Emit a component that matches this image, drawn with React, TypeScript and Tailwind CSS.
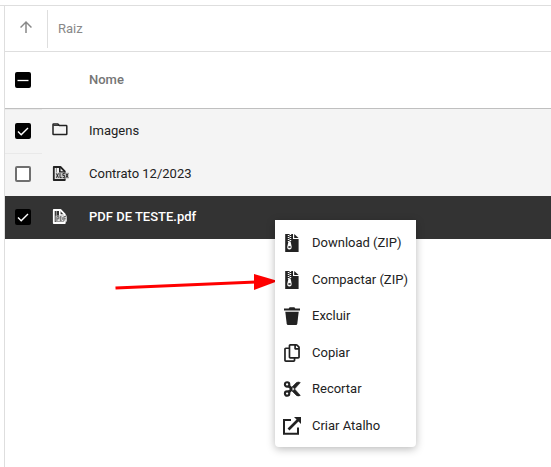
import { useEffect, useRef, useState } from "react";
import type { ReactNode } from "react";
import { FaRegCopy } from "react-icons/fa";
import { MdArrowUpward } from "react-icons/md";

function Checkbox({ label, initial = false, mixed = false }: { label: string; initial?: boolean; mixed?: boolean }) {
  const [checked, setChecked] = useState(initial);
  const ref = useRef<HTMLInputElement>(null);
  useEffect(() => {
    if (ref.current) ref.current.indeterminate = mixed;
  }, [mixed]);
  const filled = checked || mixed;
  return (
    <span className="relative block size-4">
      <input
        ref={ref}
        type="checkbox"
        aria-label={label}
        checked={checked}
        onChange={(e) => setChecked(e.target.checked)}
        className="block size-4 appearance-none rounded-xs border-2 border-[#6f6f6f] bg-white checked:border-black checked:bg-black indeterminate:border-black indeterminate:bg-black"
      />
      {filled && (
        <svg viewBox="0 0 16 16" className="pointer-events-none absolute inset-0 size-4" fill="none" stroke="white">
          {mixed ? <path d="M2.5 8.5h11" strokeWidth="1.3" /> : <path d="M3 8.6l3.2 3.2L13 4.9" strokeWidth="1.4" />}
        </svg>
      )}
    </span>
  );
}

function FolderIcon() {
  return (
    <svg viewBox="0 0 18 18" className="size-[18px]" fill="none" stroke="#222" strokeWidth="1.5">
      <path d="M2 13V3.6q0-.6.6-.6h4.2l1.6 1.6h6.8q.6 0 .6.6V13q0 .6-.6.6H2.6q-.6 0-.6-.6z" />
      <path d="M2.4 4.4h5.8" strokeWidth="1" />
    </svg>
  );
}

function FileTypeIcon({ kind, dark = false }: { kind: "XLSX" | "PDF"; dark?: boolean }) {
  const ink = dark ? "#ffffff" : "#222222";
  const wide = kind === "XLSX";
  return (
    <svg viewBox="0 0 18 18" className="size-[18px]" fill="none">
      <path d="M2.8 15V2h6.7l4.3 4.3V15z" stroke={ink} strokeWidth="1.8" strokeLinejoin="round" />
      <path d="M8.8 2v5h5" stroke={ink} strokeWidth="1.6" />
      <path d="M5.4 3v4.5" stroke={ink} strokeWidth="1" opacity="0.5" />
      <rect x="4.6" y="7.6" width={wide ? 13.2 : 11.2} height="6" fill={dark ? "#e6e6e6" : "#c4c4c4"} />
      <g stroke={dark ? "#555" : "#222"} strokeWidth="0.9">
        {wide ? (
          <path d="M5.3 8.4l2.2 4.4M7.5 8.4l-2.2 4.4M9 8.2v4.4h1.7M13.8 8.6h-1.9v1.9h1.7v2.1h-1.9M14.9 8.4l2.2 4.4M17.1 8.4l-2.2 4.4" />
        ) : (
          <path d="M5.9 13V8.6h1.9v2.2H5.9M9.3 8.6v4h.9l1-1V9.6l-1-1zM12.9 13V8.6h2.3M12.9 10.8h1.9" />
        )}
      </g>
    </svg>
  );
}

function ZipIcon() {
  return (
    <svg viewBox="0 0 18 18" className="size-[18px]" fill="currentColor">
      <path d="M2.2 0H10v5h5.6v13H2.2z" />
      <path d="M11.2 0l4.4 4H11.2z" />
      <path d="M5.6 1v7M7.4 0v7" stroke="white" strokeWidth="1.6" strokeDasharray="1 1" />
      <path d="M5.5 7.5h2.1l1 5q.3 2.9-2.2 2.9t-2.1-2.9z" fill="white" />
      <path d="M5.4 12.2h2.2v1.6H5.4z" />
    </svg>
  );
}

function TrashIcon() {
  return (
    <svg viewBox="0 0 18 18" className="size-[18px]" fill="currentColor">
      <path d="M1 1.5h4.7L6.6.3h4.8l.9 1.2H17v2H1z" />
      <path d="M2.3 4.8h13.4l-1.4 12q-.2 1.2-1.4 1.2H5.1q-1.2 0-1.4-1.2z" />
    </svg>
  );
}

function CutIcon() {
  return (
    <svg viewBox="0 0 18 18" className="size-[18px]" fill="none" stroke="currentColor">
      <circle cx="4.1" cy="4.4" r="2.2" strokeWidth="2.1" />
      <circle cx="4.1" cy="13.6" r="2.2" strokeWidth="2.1" />
      <path d="M5.8 6L9 9M5.8 12L9 9" strokeWidth="3" />
      <path d="M7 9L13.4 2.6q1.8-1.2 3.9 0L9.8 11zM7 9l6.4 6.4q1.8 1.2 3.9 0L9.8 7z" fill="currentColor" strokeWidth="0.6" />
    </svg>
  );
}

function ShortcutIcon() {
  return (
    <svg viewBox="0 0 18 18" className="size-[18px]" fill="none" stroke="currentColor" strokeWidth="2">
      <path d="M8 3H1v13.8h14V10.5" />
      <path d="M5.5 12.5L15 3" strokeWidth="2.6" />
      <path d="M11 0h7v7z" fill="currentColor" stroke="none" />
    </svg>
  );
}

const rows = [
  { name: "Imagens", checked: true, selected: false, icon: <FolderIcon /> },
  { name: "Contrato 12/2023", checked: false, selected: false, icon: <FileTypeIcon kind="XLSX" /> },
  { name: "PDF DE TESTE.pdf", checked: true, selected: true, icon: <FileTypeIcon kind="PDF" dark /> },
];

const actions: { label: string; icon: ReactNode }[] = [
  { label: "Download (ZIP)", icon: <ZipIcon /> },
  { label: "Compactar (ZIP)", icon: <ZipIcon /> },
  { label: "Excluir", icon: <TrashIcon /> },
  { label: "Copiar", icon: <FaRegCopy /> },
  { label: "Recortar", icon: <CutIcon /> },
  { label: "Criar Atalho", icon: <ShortcutIcon /> },
];

export default function App() {
  return (
    <div className="relative min-h-screen bg-white pt-[5px] font-['Roboto',sans-serif] text-[13px] leading-5 text-[#222]">
      <div className="border-t border-[#dedede] pl-1">
        <main className="min-h-[calc(100vh-6px)] border-l border-[#dedede]">
          <nav className="flex h-[46px] items-center border-b border-[#dedede]">
            <button type="button" aria-label="Subir um nível" className="flex h-full w-[42px] items-center justify-center pb-1 text-[#888]">
              <MdArrowUpward className="size-[18px]" />
            </button>
            <div className="flex h-[38px] items-center border-l border-[#dedede] pl-[10px] text-[#888]">Raiz</div>
          </nav>
          <table className="w-full table-fixed border-separate border-spacing-0 text-left">
            <thead>
              <tr className="h-[57px]">
                <th className="w-[37px] border-b border-[#bfbfbf] pl-[10px]">
                  <Checkbox label="Selecionar tudo" mixed />
                </th>
                <th className="w-[47px] border-b border-[#bfbfbf]" />
                <th className="border-b border-[#bfbfbf] font-medium text-[#757575]">Nome</th>
              </tr>
            </thead>
            <tbody>
              {rows.map((row) => (
                <tr key={row.name} className={row.selected ? "h-[43px] bg-[#333] font-medium text-white" : "h-[43px] bg-[#f4f4f4] first:h-11"}>
                  <td className={row.selected ? "pb-0.5 pl-[10px]" : "border-t border-[#e9e9e9] pb-0.5 pl-[10px]"}>
                    <Checkbox label={`Selecionar ${row.name}`} initial={row.checked} />
                  </td>
                  <td className="pb-0.5 pl-[9px]">{row.icon}</td>
                  <td className="pb-px">{row.name}</td>
                </tr>
              ))}
            </tbody>
          </table>
        </main>
      </div>

      <svg viewBox="0 0 164 18" className="absolute top-[273px] left-[115px] h-[18px] w-[164px]" aria-hidden="true">
        <path d="M0.5 15L142 9" stroke="#f00" strokeWidth="3" />
        <path d="M139 1L163 8L139 17z" fill="#f00" />
      </svg>

      <div role="menu" className="absolute top-[220px] left-[275px] grid h-[227px] w-[141px] auto-rows-fr rounded-b-sm bg-white pt-[5px] pb-[3px] shadow-[0_2px_8px_rgba(0,0,0,0.28)]">
        {actions.map((action) => (
          <button key={action.label} type="button" role="menuitem" className="flex items-center gap-[11px] pl-2 text-left whitespace-nowrap">
            <span className="flex w-[18px] justify-center text-[18px]">{action.icon}</span>
            {action.label}
          </button>
        ))}
      </div>
    </div>
  );
}
